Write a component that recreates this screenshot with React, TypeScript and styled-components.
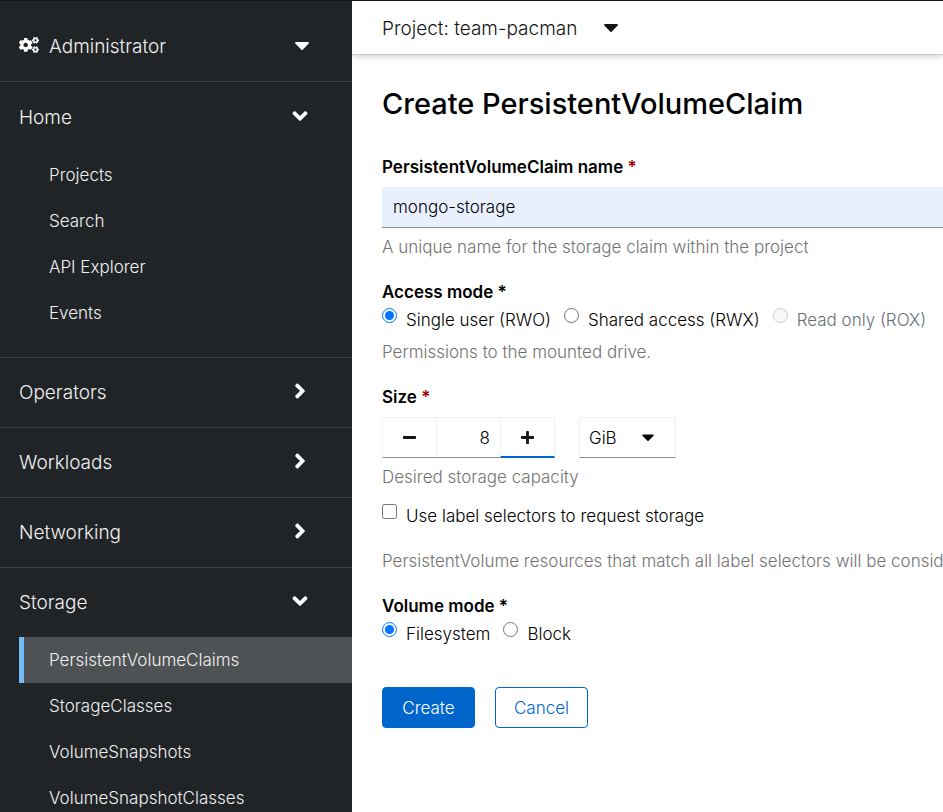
import React, { useState } from "react";
import styled, { createGlobalStyle } from "styled-components";
import { FaAngleDown, FaAngleRight, FaCaretDown, FaCogs, FaMinus, FaPlus } from "react-icons/fa";

const GlobalStyle = createGlobalStyle`
  *, *::before, *::after { box-sizing: border-box; }
  body {
    margin: 0;
    background: #fff;
    color: #151515;
    font-family: Inter, "Liberation Sans", sans-serif;
    font-size: 17px;
    font-weight: 300;
    line-height: 24px;
  }
  button, input, select { font: inherit; color: inherit; }
`;

const Page = styled.div`
  display: grid;
  grid-template-columns: 352px minmax(0, 1fr);
  height: 100vh;
  border-top: 1px solid #151515;
`;

const Sidebar = styled.nav`
  overflow: hidden auto;
  scrollbar-width: none;
  background: #212427;
  color: #f0f0f0;
`;

const NavToggle = styled.button<{ $tall?: boolean }>`
  display: flex;
  align-items: center;
  width: 100%;
  height: ${(p) => (p.$tall ? 80 : 69)}px;
  padding: ${(p) => (p.$tall ? "12px 38px 0 19px" : "0 40px 0 19px")};
  border: 0;
  background: none;
  font-size: 19px;
  text-align: left;
  cursor: pointer;
`;

const NavLabel = styled.span`
  flex: 1;
`;

const CogsIcon = styled(FaCogs)`
  width: 20px;
  height: 16px;
  margin: 0 10px 4px 0;
  color: #fff;
`;

const IconSlot = styled.span`
  display: flex;
  justify-content: center;
  width: 24px;
  padding-bottom: 4px;
  color: #fff;
  font-size: 24px;
`;

const NavSection = styled.section<{ $open?: boolean }>`
  border-top: 1px solid #3c3f42;
  padding-bottom: ${(p) => (p.$open ? 22 : 0)}px;

  &:first-of-type {
    padding: 1px 0 21px;
  }
`;

const NavList = styled.ul`
  margin: 0;
  padding: 0 0 0 19px;
  list-style: none;
`;

const NavLink = styled.a<{ $current?: boolean }>`
  display: block;
  padding: 11px 0 11px 25px;
  border-left: 5px solid ${(p) => (p.$current ? "#73bcf7" : "transparent")};
  background: ${(p) => (p.$current ? "#4f5255" : "transparent")};
  color: inherit;
  text-decoration: none;
`;

const Main = styled.main`
  overflow: hidden auto;
  scrollbar-width: none;
`;

const ProjectBar = styled.header`
  height: 54px;
  padding: 0 30px;
  border-bottom: 1px solid #c8c8c8;
  box-shadow: 0 2px 6px rgba(3, 3, 3, 0.16);
`;

const ProjectButton = styled.button`
  display: flex;
  align-items: center;
  gap: 22px;
  height: 53px;
  padding: 2px 0 0;
  border: 0;
  background: none;
  font-size: 19px;
  cursor: pointer;

  svg {
    margin-bottom: 4px;
    font-size: 24px;
  }
`;

const Form = styled.form`
  padding: 29px 0 40px 30px;
  color: #000;
`;

const Title = styled.h1`
  margin: 0 0 31px;
  font-size: 29px;
  font-weight: 500;
  line-height: 40px;
  white-space: nowrap;
`;

const Field = styled.fieldset<{ $tight?: boolean }>`
  min-width: 0;
  margin: 0 0 ${(p) => (p.$tight ? 15 : 21)}px;
  padding: 0;
  border: 0;
`;

const FieldLabel = styled.label`
  display: block;
  margin-bottom: 8px;
  font-weight: 600;
`;

const Legend = styled.legend`
  padding: 0;
  margin-bottom: 4px;
  font-weight: 600;
`;

const Required = styled.span`
  color: #a30000;
`;

const Help = styled.p<{ $gap?: number }>`
  margin: ${(p) => p.$gap ?? 7}px 0 0;
  color: #737373;
  white-space: nowrap;
`;

const TextInput = styled.input`
  display: block;
  width: 100%;
  height: 41px;
  padding: 0 11px;
  border: 0;
  border-bottom: 1px solid #8a8d90;
  border-radius: 0;
  background: #e8f0fe;
`;

const Choices = styled.div`
  display: flex;
  gap: 13px;
  white-space: nowrap;
`;

const Choice = styled.label<{ $disabled?: boolean }>`
  display: flex;
  align-items: flex-start;
  gap: 9px;
  color: ${(p) => (p.$disabled ? "#6a6e73" : "#000")};

  input {
    flex: none;
    width: 15px;
    height: 15px;
    margin: 0;
  }
`;

const SizeRow = styled.div`
  display: flex;
  gap: 24px;
`;

const Stepper = styled.div`
  display: flex;
  height: 41px;
`;

const StepButton = styled.button<{ $active?: boolean }>`
  display: grid;
  place-items: center;
  width: 55px;
  padding: 0;
  border: 1px solid #f0f0f0;
  border-bottom: ${(p) => (p.$active ? "2px solid #06c" : "1px solid #8a8d90")};
  background: #fff;
  color: #151515;
  font-size: 15px;
  cursor: pointer;
`;

const AmountInput = styled.input`
  width: 63px;
  padding: 0 10px;
  border: solid #f0f0f0;
  border-width: 1px 0;
  border-bottom-color: #8a8d90;
  border-radius: 0;
  text-align: right;
`;

const UnitPicker = styled.div`
  position: relative;

  svg {
    position: absolute;
    top: 10px;
    right: 18px;
    font-size: 20px;
    pointer-events: none;
  }
`;

const UnitSelect = styled.select`
  width: 97px;
  height: 41px;
  padding: 0 9px;
  appearance: none;
  border: 1px solid #f0f0f0;
  border-bottom-color: #8a8d90;
  border-radius: 0;
  background: #fff;
`;

const Actions = styled.div`
  display: flex;
  gap: 20px;
  padding-top: 20px;
`;

const ActionButton = styled.button<{ $primary?: boolean }>`
  width: 93px;
  height: 41px;
  padding: 0;
  border: 1px solid #06c;
  border-radius: 4px;
  background: ${(p) => (p.$primary ? "#06c" : "#fff")};
  color: ${(p) => (p.$primary ? "#fff" : "#06c")};
  cursor: pointer;
`;

type Section = { name: string; items?: string[] };

const sections: Section[] = [
  { name: "Home", items: ["Projects", "Search", "API Explorer", "Events"] },
  { name: "Operators" },
  { name: "Workloads" },
  { name: "Networking" },
  {
    name: "Storage",
    items: ["PersistentVolumeClaims", "StorageClasses", "VolumeSnapshots", "VolumeSnapshotClasses"],
  },
];

const currentItem = "PersistentVolumeClaims";

export default function App() {
  const [name, setName] = useState("mongo-storage");
  const [size, setSize] = useState(8);

  return (
    <>
      <GlobalStyle />
      <Page>
        <Sidebar aria-label="Main navigation">
          <NavToggle $tall type="button">
            <CogsIcon aria-hidden />
            <NavLabel>Administrator</NavLabel>
            <IconSlot><FaCaretDown aria-hidden /></IconSlot>
          </NavToggle>
          {sections.map(({ name: title, items }) => (
            <NavSection key={title} $open={!!items}>
              <NavToggle type="button" aria-expanded={!!items}>
                <NavLabel>{title}</NavLabel>
                <IconSlot>{items ? <FaAngleDown aria-hidden /> : <FaAngleRight aria-hidden />}</IconSlot>
              </NavToggle>
              {items && (
                <NavList>
                  {items.map((item) => (
                    <li key={item}>
                      <NavLink href="#" $current={item === currentItem}>{item}</NavLink>
                    </li>
                  ))}
                </NavList>
              )}
            </NavSection>
          ))}
        </Sidebar>

        <Main>
          <ProjectBar>
            <ProjectButton type="button">
              Project: team-pacman
              <FaCaretDown aria-hidden />
            </ProjectButton>
          </ProjectBar>

          <Form onSubmit={(e) => e.preventDefault()}>
            <Title>Create PersistentVolumeClaim</Title>

            <Field>
              <FieldLabel htmlFor="pvc-name">
                PersistentVolumeClaim name <Required>*</Required>
              </FieldLabel>
              <TextInput id="pvc-name" value={name} onChange={(e) => setName(e.target.value)} />
              <Help>A unique name for the storage claim within the project</Help>
            </Field>

            <Field>
              <Legend>Access mode *</Legend>
              <Choices>
                <Choice><input type="radio" name="access" defaultChecked />Single user (RWO)</Choice>
                <Choice><input type="radio" name="access" />Shared access (RWX)</Choice>
                <Choice $disabled><input type="radio" name="access" disabled />Read only (ROX)</Choice>
              </Choices>
              <Help $gap={8}>Permissions to the mounted drive.</Help>
            </Field>

            <Field $tight>
              <FieldLabel htmlFor="pvc-size">
                Size <Required>*</Required>
              </FieldLabel>
              <SizeRow>
                <Stepper>
                  <StepButton type="button" aria-label="Decrement" onClick={() => setSize(Math.max(0, size - 1))}>
                    <FaMinus aria-hidden />
                  </StepButton>
                  <AmountInput
                    id="pvc-size"
                    inputMode="numeric"
                    value={size}
                    onChange={(e) => setSize(Number(e.target.value) || 0)}
                  />
                  <StepButton $active type="button" aria-label="Increment" onClick={() => setSize(size + 1)}>
                    <FaPlus aria-hidden />
                  </StepButton>
                </Stepper>
                <UnitPicker>
                  <UnitSelect aria-label="Unit" defaultValue="GiB">
                    <option>MiB</option>
                    <option>GiB</option>
                    <option>TiB</option>
                  </UnitSelect>
                  <FaCaretDown aria-hidden />
                </UnitPicker>
              </SizeRow>
              <Help>Desired storage capacity</Help>
            </Field>

            <Field>
              <Choices>
                <Choice><input type="checkbox" />Use label selectors to request storage</Choice>
              </Choices>
              <Help $gap={21}>
                PersistentVolume resources that match all label selectors will be considered for binding.
              </Help>
            </Field>

            <Field>
              <Legend>Volume mode *</Legend>
              <Choices>
                <Choice><input type="radio" name="volume" defaultChecked />Filesystem</Choice>
                <Choice><input type="radio" name="volume" />Block</Choice>
              </Choices>
            </Field>

            <Actions>
              <ActionButton $primary type="submit">Create</ActionButton>
              <ActionButton type="button">Cancel</ActionButton>
            </Actions>
          </Form>
        </Main>
      </Page>
    </>
  );
}
